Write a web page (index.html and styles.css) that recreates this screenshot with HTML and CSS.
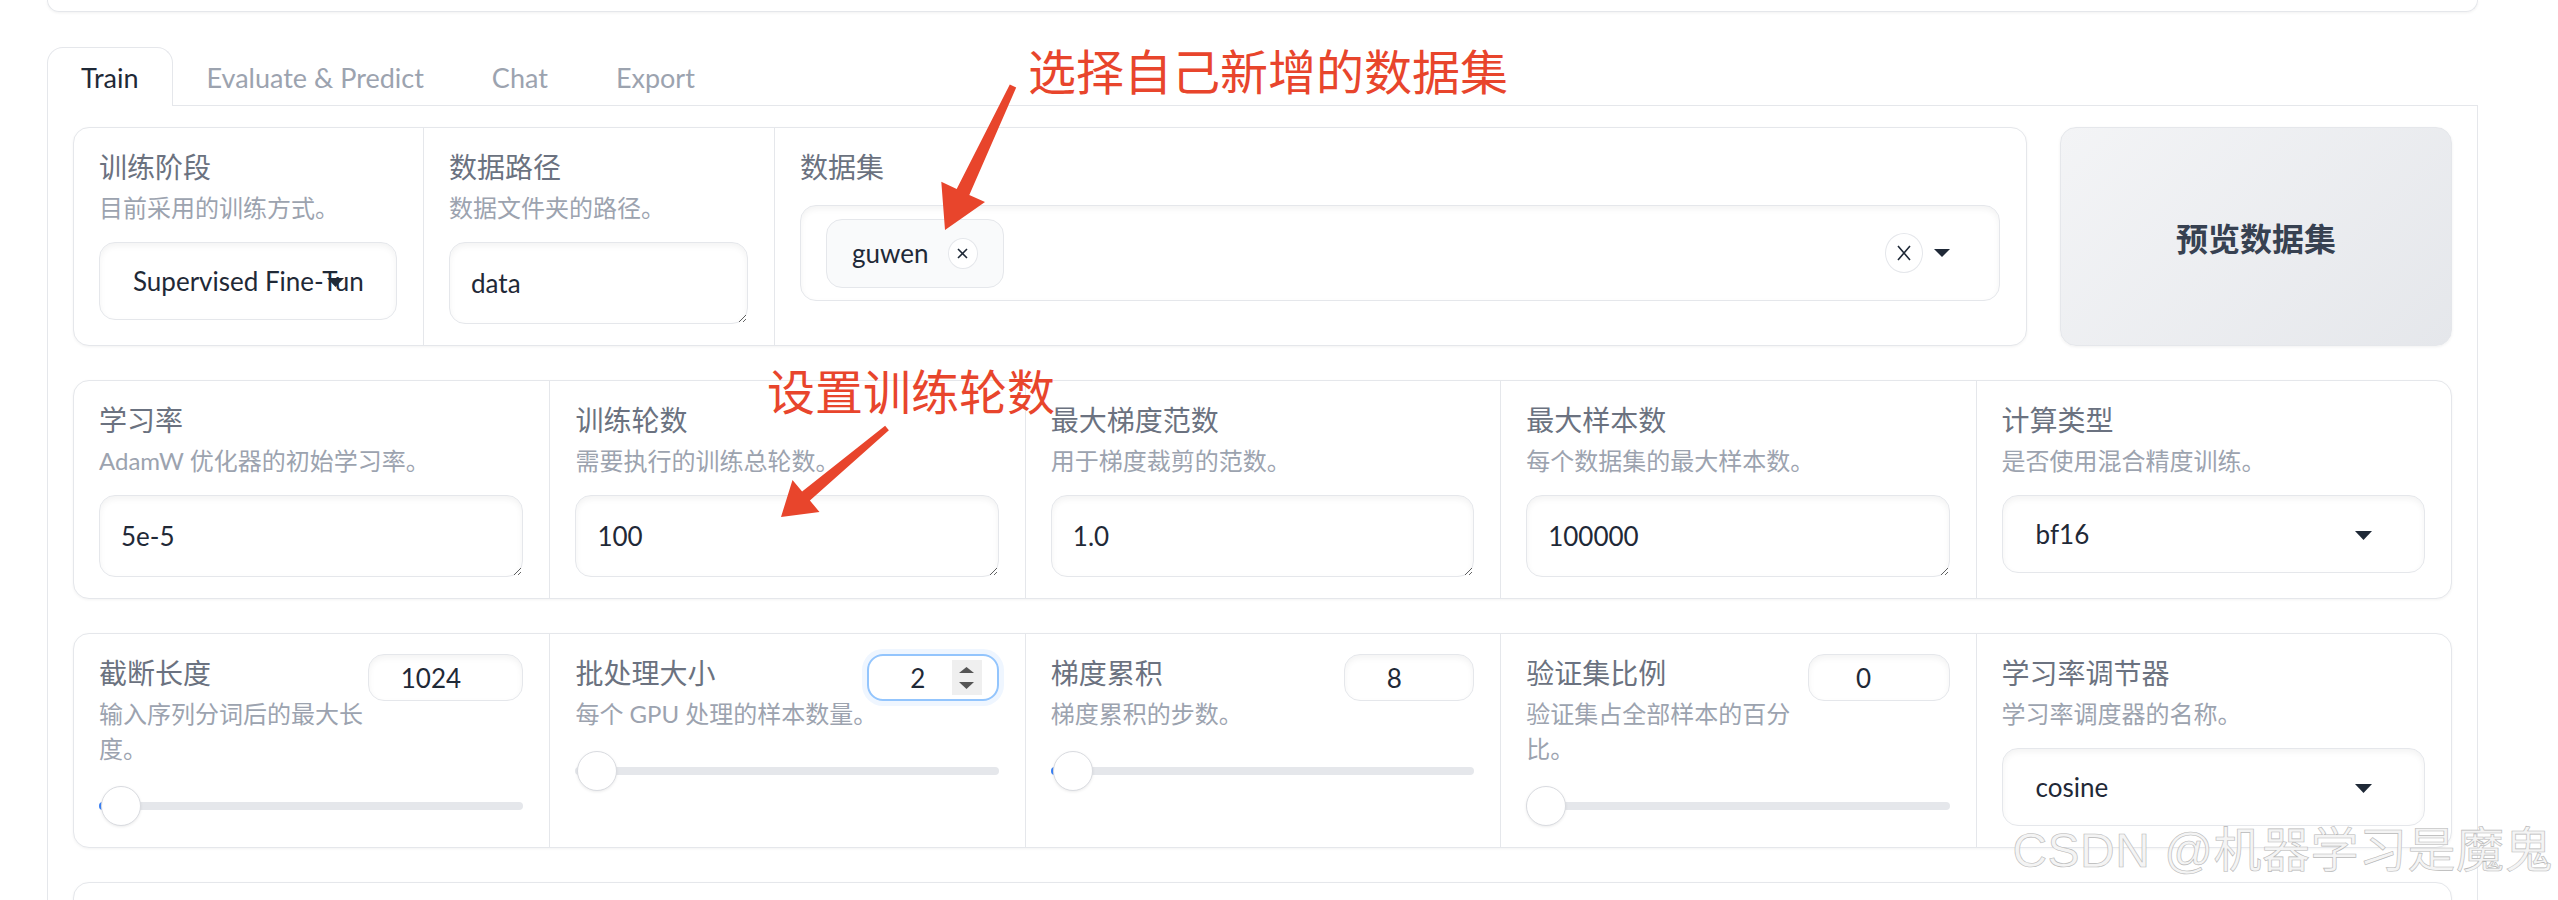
FILE: index.html
```html
<!DOCTYPE html>
<html>
<head>
  <meta charset="UTF-8" />
  <title>LLaMA Board - Train</title>
  <link rel="stylesheet" href="styles.css">
</head>
<body>

  <div class="page">
    <!-- bottom edge of the card above the tabs -->
    <div class="top-card"></div>

    <div class="tabs">
      <div class="tab-nav">
        <button class="tab selected">Train</button>
        <button class="tab">Evaluate &amp; Predict</button>
        <button class="tab">Chat</button>
        <button class="tab">Export</button>
      </div>

      <div class="tab-panel">

        <!-- stage / dataset row -->
        <div class="row-data">
          <div class="form form-data">
            <div class="field">
              <div class="label">训练阶段</div>
              <div class="info">目前采用的训练方式。</div>
              <div class="dropdown">
                <span class="value">Supervised Fine-Tuning</span>
                <svg class="arrow" viewBox="0 0 17 9"><path d="M0 0h17L8.5 9z" /></svg>
              </div>
            </div>
            <div class="field">
              <div class="label">数据路径</div>
              <div class="info">数据文件夹的路径。</div>
              <textarea class="textbox" rows="1">data</textarea>
            </div>
            <div class="field field-multi">
              <div class="label">数据集</div>
              <div class="multiselect">
                <span class="token">guwen
                  <span class="token-remove">
                    <svg width="11" height="11" viewBox="0 0 11 11"><path d="M1 1l9 9M10 1L1 10" /></svg>
                  </span>
                </span>
                <span class="multi-icons">
                  <span class="clear">
                    <svg width="14" height="16" viewBox="0 0 14 16"><path d="M1 1l12 14M13 1L1 15" /></svg>
                  </span>
                  <svg class="multi-arrow" viewBox="0 0 16 8"><path d="M0 0h16L8 8z" /></svg>
                </span>
              </div>
            </div>
          </div>
          <button class="preview-btn">预览数据集</button>
        </div>

        <!-- optimizer row -->
        <div class="form form-5">
          <div class="field">
            <div class="label">学习率</div>
            <div class="info">AdamW 优化器的初始学习率。</div>
            <textarea class="textbox" rows="1">5e-5</textarea>
          </div>
          <div class="field">
            <div class="label">训练轮数</div>
            <div class="info">需要执行的训练总轮数。</div>
            <textarea class="textbox" rows="1">100</textarea>
          </div>
          <div class="field">
            <div class="label">最大梯度范数</div>
            <div class="info">用于梯度裁剪的范数。</div>
            <textarea class="textbox" rows="1">1.0</textarea>
          </div>
          <div class="field">
            <div class="label">最大样本数</div>
            <div class="info">每个数据集的最大样本数。</div>
            <textarea class="textbox" rows="1">100000</textarea>
          </div>
          <div class="field">
            <div class="label">计算类型</div>
            <div class="info">是否使用混合精度训练。</div>
            <div class="dropdown">
              <span class="value">bf16</span>
              <svg class="arrow" viewBox="0 0 17 9"><path d="M0 0h17L8.5 9z" /></svg>
            </div>
          </div>
        </div>

        <!-- slider row -->
        <div class="form form-5">
          <div class="field">
            <div class="slider-head">
              <div class="slider-text">
                <div class="label">截断长度</div>
                <div class="info">输入序列分词后的最大长度。</div>
              </div>
              <div class="number num-cutoff">1024</div>
            </div>
            <div class="slider filled"><span class="track"></span><span class="fill"></span><span class="thumb"></span></div>
          </div>
          <div class="field">
            <div class="slider-head">
              <div class="slider-text">
                <div class="label">批处理大小</div>
                <div class="info nowrap">每个 GPU 处理的样本数量。</div>
              </div>
              <div class="number num-batch focused">2
                <span class="spinner">
                  <svg width="15" height="6" viewBox="0 0 15 6"><path d="M7.5 0L15 6H0z" /></svg>
                  <svg width="15" height="7" viewBox="0 0 15 7"><path d="M0 0h15L7.5 7z" /></svg>
                </span>
              </div>
            </div>
            <div class="slider"><span class="track"></span><span class="thumb"></span></div>
          </div>
          <div class="field">
            <div class="slider-head">
              <div class="slider-text">
                <div class="label">梯度累积</div>
                <div class="info">梯度累积的步数。</div>
              </div>
              <div class="number num-accum">8</div>
            </div>
            <div class="slider filled"><span class="track"></span><span class="fill"></span><span class="thumb"></span></div>
          </div>
          <div class="field">
            <div class="slider-head">
              <div class="slider-text">
                <div class="label">验证集比例</div>
                <div class="info">验证集占全部样本的百分比。</div>
              </div>
              <div class="number num-val">0</div>
            </div>
            <div class="slider"><span class="track"></span><span class="thumb thumb-start"></span></div>
          </div>
          <div class="field">
            <div class="label">学习率调节器</div>
            <div class="info">学习率调度器的名称。</div>
            <div class="dropdown">
              <span class="value">cosine</span>
              <svg class="arrow" viewBox="0 0 17 9"><path d="M0 0h17L8.5 9z" /></svg>
            </div>
          </div>
        </div>

        <div class="form form-empty"></div>
      </div>
    </div>
  </div>

  <!-- red callouts drawn over the form -->
  <div class="notes">
    <svg class="note-arrows" width="2558" height="900" viewBox="0 0 2558 900">
      <polygon points="1009.8,84.5 1016.2,87.5 969.3,195 985,202 945,230 941.3,181.8 956.7,189" />
      <polygon points="885.1,425.7 888.9,430.3 809.9,500.6 819.5,512 781,517 792.5,480 802.1,491.4" />
    </svg>
    <div class="note-text note-dataset">选择自己新增的数据集</div>
    <div class="note-text note-epochs">设置训练轮数</div>
  </div>

  <div class="watermark">CSDN @机器学习是魔鬼</div>

</body>
</html>
```

FILE: styles.css
```css
body {
  margin: 0;
  font-family: "Lato", "Noto Sans CJK SC", sans-serif;
  background: #ffffff;
  height: 900px;
  overflow: hidden;
  position: relative;
}
.page {
  margin-left: 47px;
  width: 2431px;
}
.top-card {
  height: 11px;
  border: 1px solid #e5e7eb;
  border-top: none;
  border-radius: 0 0 16px 16px;
  box-shadow: 0 1px 3px rgba(0,0,0,0.06);
}
.tabs {
  margin-top: 35px;
}
.tab-nav {
  display: flex;
  border-bottom: 1px solid #e5e7eb;
}
.tab {
  height: 59px;
  box-sizing: border-box;
  padding: 0 33px;
  margin-bottom: -1px;
  border: 1px solid transparent;
  border-bottom: none;
  border-radius: 16px 16px 0 0;
  background: none;
  font-family: "Lato", sans-serif;
  font-size: 27px;
  color: #9ca3af;
}
.tab.selected {
  border-color: #e5e7eb;
  background: #ffffff;
  color: #1f2937;
}
.tab-panel {
  border: 1px solid #e5e7eb;
  border-top: none;
  padding: 21px 25px 0 25px;
  min-height: 900px;
  display: flex;
  flex-direction: column;
  gap: 34px;
}

/* blocks */
.row-data {
  display: grid;
  grid-template-columns: 1fr 392px;
  gap: 33px;
}
.form {
  display: grid;
  flex-shrink: 0;
  border: 1px solid #e5e7eb;
  border-radius: 16px;
  background: #ffffff;
  box-shadow: 0 1px 3px rgba(0,0,0,0.05);
}
.form-data {
  grid-template-columns: 349px 351px 1fr;
}
.form-5 {
  grid-template-columns: repeat(5, 1fr);
}
.form-empty {
  height: 200px;
}
.field {
  padding: 22px 26px 21px 25px;
  min-width: 0;
}
.field + .field {
  border-left: 1px solid #e5e7eb;
}
.label {
  font-size: 28px;
  line-height: 34px;
  color: #6b7280;
  margin-bottom: 6px;
}
.info {
  font-size: 24px;
  line-height: 35px;
  color: #9ca3af;
  margin-bottom: 17px;
}
.info.nowrap {
  white-space: nowrap;
}
.field-multi .label {
  margin-bottom: 21px;
}

/* inputs */
.textbox {
  display: block;
  width: 100%;
  height: 82px;
  box-sizing: border-box;
  padding: 19px 21px;
  border: 1px solid #e5e7eb;
  border-radius: 16px;
  font-family: "Lato", sans-serif;
  font-size: 26px;
  line-height: 42px;
  color: #1f2937;
  box-shadow: inset 0 3px 6px rgba(0,0,0,0.05);
  resize: vertical;
  overflow: hidden;
  outline: none;
}
.dropdown {
  position: relative;
  display: flex;
  align-items: center;
  height: 78px;
  box-sizing: border-box;
  padding: 0 33px;
  border: 1px solid #e5e7eb;
  border-radius: 16px;
  box-shadow: inset 0 3px 6px rgba(0,0,0,0.05);
  font-size: 26px;
  color: #1f2937;
}
.dropdown .value {
  min-width: 0;
  white-space: nowrap;
  overflow: hidden;
}
.dropdown .arrow {
  position: absolute;
  right: 52px;
  top: 50%;
  margin-top: -3px;
  width: 17px;
  height: 9px;
  fill: #1f2937;
}
.multiselect {
  display: flex;
  align-items: center;
  height: 96px;
  box-sizing: border-box;
  padding: 0 49px 0 25px;
  border: 1px solid #e5e7eb;
  border-radius: 16px;
  box-shadow: inset 0 3px 6px rgba(0,0,0,0.05);
}
.token {
  display: flex;
  align-items: center;
  gap: 19px;
  height: 69px;
  box-sizing: border-box;
  padding: 0 25px;
  border: 1px solid #e5e7eb;
  border-radius: 16px;
  background: #f9fafb;
  font-size: 26px;
  color: #1f2937;
}
.token-remove {
  display: flex;
  align-items: center;
  justify-content: center;
  width: 30px;
  height: 31px;
  box-sizing: border-box;
  border: 1px solid #e5e7eb;
  border-radius: 50%;
  background: #ffffff;
}
.token-remove path,
.clear path {
  stroke: #1f2937;
  stroke-width: 1.6;
  fill: none;
}
.multi-icons {
  margin-left: auto;
  display: flex;
  align-items: center;
  gap: 11px;
}
.clear {
  display: flex;
  align-items: center;
  justify-content: center;
  width: 38px;
  height: 40px;
  box-sizing: border-box;
  border: 1px solid #e5e7eb;
  border-radius: 50%;
}
.multi-arrow {
  width: 16px;
  height: 8px;
  fill: #1f2937;
}
.preview-btn {
  border: 1px solid #e5e7eb;
  border-radius: 16px;
  background: linear-gradient(135deg, #f3f4f6, #e5e7eb);
  box-shadow: 0 1px 3px rgba(0,0,0,0.06);
  font-family: "Noto Sans CJK SC", sans-serif;
  font-weight: 700;
  font-size: 32px;
  color: #374151;
}

/* sliders with number boxes */
.slider-head {
  display: flex;
  align-items: flex-start;
}
.slider-text {
  flex: 1;
  min-width: 0;
}
.slider-text .info {
  margin-bottom: 0;
}
.number {
  position: relative;
  flex-shrink: 0;
  margin-top: -2px;
  height: 47px;
  box-sizing: border-box;
  padding-right: 30px;
  display: flex;
  align-items: center;
  justify-content: center;
  border: 1px solid #e5e7eb;
  border-radius: 16px;
  box-shadow: inset 0 3px 6px rgba(0,0,0,0.05);
  font-size: 26px;
  color: #1f2937;
}
.num-cutoff { width: 155px; }
.num-batch { width: 132px; }
.num-accum { width: 130px; }
.num-val { width: 142px; }
.number.focused {
  border: 2px solid #93c5fd;
  box-shadow: 0 0 0 5px #eff6ff;
}
.spinner {
  position: absolute;
  right: 15px;
  top: 4px;
  width: 30px;
  height: 35px;
  background: #efefef;
  display: flex;
  flex-direction: column;
  align-items: center;
  justify-content: center;
  gap: 9px;
  fill: #555555;
}
.slider {
  position: relative;
  height: 40px;
  margin-top: 20px;
  display: flex;
  align-items: center;
}
.track {
  flex: 1;
  height: 8px;
  border-radius: 4px;
  background: #e5e7eb;
}
.fill {
  position: absolute;
  left: 0;
  top: 16px;
  width: 8px;
  height: 8px;
  border-radius: 4px;
  background: #3b82f6;
}
.thumb {
  position: absolute;
  left: 2px;
  top: 0;
  width: 40px;
  height: 40px;
  box-sizing: border-box;
  border: 1px solid #d9dbe0;
  border-radius: 50%;
  background: #ffffff;
  box-shadow: 0 1px 3px rgba(0,0,0,0.08);
}
.thumb-start {
  left: 0;
}

/* callouts */
.notes {
  position: absolute;
  left: 0;
  top: 0;
  width: 2558px;
  height: 900px;
  pointer-events: none;
}
.note-arrows {
  position: absolute;
  left: 0;
  top: 0;
  fill: #e8452c;
}
.note-text {
  position: absolute;
  font-family: "Noto Sans CJK SC", sans-serif;
  font-size: 48px;
  line-height: 48px;
  color: #e8452c;
  white-space: nowrap;
}
.note-dataset {
  left: 1028px;
  top: 45px;
}
.note-epochs {
  left: 767px;
  top: 365px;
}
.watermark {
  position: absolute;
  right: 5px;
  top: 827px;
  font-family: "Liberation Sans", "Noto Sans CJK SC", sans-serif;
  font-size: 48px;
  line-height: 48px;
  letter-spacing: 0.5px;
  color: #f4f4f4;
  -webkit-text-stroke: 0.6px #b8b8b8;
  white-space: nowrap;
}
```
